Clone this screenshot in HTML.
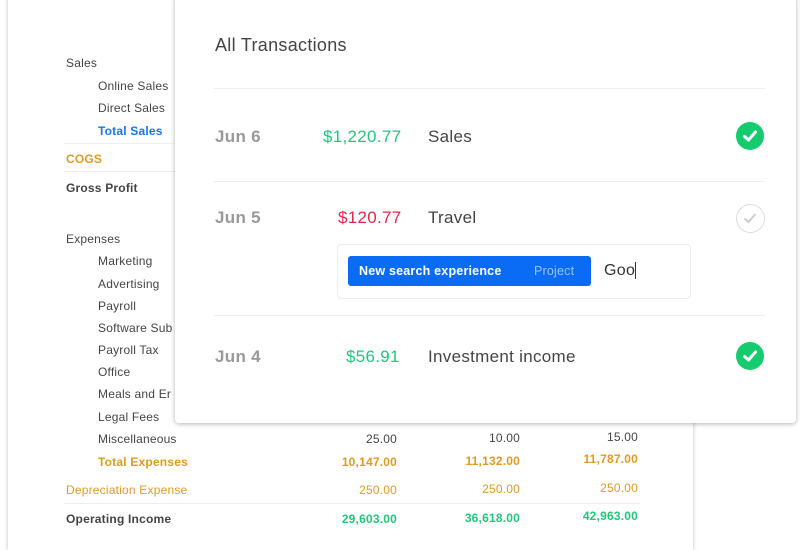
<!DOCTYPE html>
<html><head><meta charset="utf-8"><style>
*{margin:0;padding:0;box-sizing:border-box}
body{width:800px;height:533px;overflow:hidden;background:#fff;font-family:"Liberation Sans",sans-serif;position:relative}
.rep{position:absolute;left:8px;top:-10px;width:685px;height:560px;background:#fff;box-shadow:0 0 4px rgba(0,0,0,.25)}
.t{position:absolute;font-size:12px;color:#444;white-space:nowrap;letter-spacing:.2px}
.b{font-weight:bold}
.r{text-align:right;width:90px}
.line{position:absolute;height:1px;background:#eee}
.ov{position:absolute;left:175px;top:-5px;width:621px;height:428px;background:#fff;border-radius:4px;box-shadow:0 1px 5px rgba(0,0,0,.3)}
.ot{position:absolute;white-space:nowrap;font-size:17px;color:#444;letter-spacing:.3px}
.date{color:#999;font-weight:bold}
.o{color:#e09a1f !important}.g{color:#1ec97a !important}.bl{color:#1a73f0 !important}
.ck{position:absolute;width:28px;height:28px;border-radius:50%;background:#14cc6e}
</style></head><body>
<div class="rep"></div>
<div class="t" style="left:66px;top:56px">Sales</div>
<div class="t" style="left:98px;top:79px">Online Sales</div>
<div class="t" style="left:98px;top:101px">Direct Sales</div>
<div class="t b bl" style="left:98px;top:124px">Total Sales</div>
<div class="line" style="left:64px;top:143px;width:120px"></div>
<div class="t b o" style="left:66px;top:152px">COGS</div>
<div class="line" style="left:64px;top:171px;width:120px"></div>
<div class="t b" style="left:66px;top:181px">Gross Profit</div>
<div class="t" style="left:66px;top:232px">Expenses</div>
<div class="t" style="left:98px;top:254px">Marketing</div>
<div class="t" style="left:98px;top:277px">Advertising</div>
<div class="t" style="left:98px;top:299px">Payroll</div>
<div class="t" style="left:98px;top:321px">Software Sub</div>
<div class="t" style="left:98px;top:343px">Payroll Tax</div>
<div class="t" style="left:98px;top:365px">Office</div>
<div class="t" style="left:98px;top:387px">Meals and Er</div>
<div class="t" style="left:98px;top:410px">Legal Fees</div>
<div class="t" style="left:98px;top:432px">Miscellaneous</div>
<div class="t r" style="left:307px;top:432px">25.00</div>
<div class="t r" style="left:430px;top:431px">10.00</div>
<div class="t r" style="left:548px;top:430px">15.00</div>
<div class="t b o" style="left:98px;top:455px">Total Expenses</div>
<div class="t b o r" style="left:307px;top:455px">10,147.00</div>
<div class="t b o r" style="left:430px;top:454px">11,132.00</div>
<div class="t b o r" style="left:548px;top:452px">11,787.00</div>
<div class="t o" style="left:66px;top:483px">Depreciation Expense</div>
<div class="t o r" style="left:307px;top:483px">250.00</div>
<div class="t o r" style="left:430px;top:482px">250.00</div>
<div class="t o r" style="left:548px;top:481px">250.00</div>
<div class="line" style="left:64px;top:503px;width:576px"></div>
<div class="t b" style="left:66px;top:512px">Operating Income</div>
<div class="t b g r" style="left:307px;top:512px">29,603.00</div>
<div class="t b g r" style="left:430px;top:511px">36,618.00</div>
<div class="t b g r" style="left:548px;top:509px">42,963.00</div>

<div class="ov"></div>
<div class="ot" style="left:215px;top:35px;font-size:18px">All Transactions</div>
<div class="line" style="left:214px;top:88px;width:551px"></div>
<div class="ot date" style="left:215px;top:127px">Jun 6</div>
<div class="ot g" style="left:323px;top:127px">$1,220.77</div>
<div class="ot" style="left:428px;top:127px">Sales</div>
<div class="ck" style="left:736px;top:122px"><svg width="28" height="28"><path d="M8.5 14.5l4 3.5 7-8" stroke="#fff" stroke-width="3" fill="none" stroke-linecap="round" stroke-linejoin="round"/></svg></div>
<div class="line" style="left:214px;top:181px;width:551px"></div>
<div class="ot date" style="left:215px;top:208px">Jun 5</div>
<div class="ot" style="left:338px;top:208px;color:#e8254a">$120.77</div>
<div class="ot" style="left:428px;top:208px">Travel</div>
<div style="position:absolute;left:736px;top:204px;width:29px;height:29px;border-radius:50%;border:1.5px solid #ddd"><svg width="26" height="26"><path d="M7.5 13.5l4 3.5 7-8" stroke="#ccc" stroke-width="2" fill="none"/></svg></div>
<div style="position:absolute;left:337px;top:244px;width:354px;height:55px;border:1px solid #eee;border-radius:4px"></div>
<div style="position:absolute;left:348px;top:256px;width:243px;height:30px;background:#0a6cf5;border-radius:3px"></div>
<div class="t b" style="left:359px;top:264px;color:#fff;font-size:12.5px">New search experience</div>
<div class="t" style="left:534px;top:264px;color:#9cc3ff;font-size:12.5px">Project</div>
<div class="ot" style="left:604px;top:262px;font-size:16px;color:#333">Goo<span style="border-left:1.5px solid #333"></span></div>
<div class="line" style="left:214px;top:315px;width:551px"></div>
<div class="ot date" style="left:215px;top:347px">Jun 4</div>
<div class="ot g" style="left:346px;top:347px">$56.91</div>
<div class="ot" style="left:428px;top:347px">Investment income</div>
<div class="ck" style="left:736px;top:342px"><svg width="28" height="28"><path d="M8.5 14.5l4 3.5 7-8" stroke="#fff" stroke-width="3" fill="none" stroke-linecap="round" stroke-linejoin="round"/></svg></div>
</body></html>
